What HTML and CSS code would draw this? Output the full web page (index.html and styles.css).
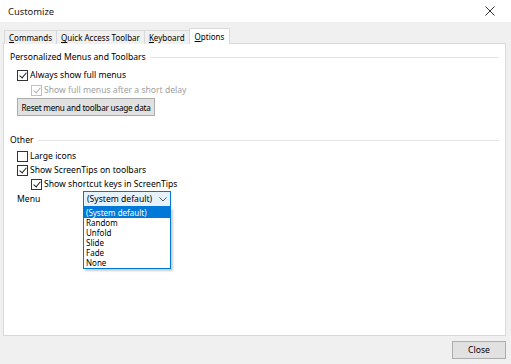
FILE: index.html
```html
<!DOCTYPE html>
<html lang="en">
<head>
  <meta charset="UTF-8" />
  <title>Customize</title>
  <link rel="stylesheet" href="styles.css">
</head>
<body>
  <div class="dialog">
    <div class="titlebar">
      <span class="title">Customize</span>
      <svg class="close-x" width="10" height="10" viewBox="0 0 10 10">
        <path d="M0.5 0.5 L9.5 9.5 M9.5 0.5 L0.5 9.5" stroke="#333" stroke-width="1" fill="none"/>
      </svg>
    </div>

    <div class="tabs">
      <div class="tab"><u>C</u>ommands</div>
      <div class="tab"><u>Q</u>uick Access Toolbar</div>
      <div class="tab"><u>K</u>eyboard</div>
      <div class="tab active"><u>O</u>ptions</div>
    </div>

    <div class="panel">
      <div class="group-title"><span>Personalized Menus and Toolbars</span></div>
      <label class="check first"><span class="box checked"></span>Always show full menus</label>
      <label class="check sub disabled"><span class="box checked"></span>Show full menus after a short delay</label>
      <button class="btn reset">Reset menu and toolbar usage data</button>

      <div class="group-title other"><span>Other</span></div>
      <label class="check"><span class="box"></span>Large icons</label>
      <label class="check"><span class="box checked"></span>Show ScreenTips on toolbars</label>
      <label class="check sub"><span class="box checked"></span>Show shortcut keys in ScreenTips</label>

      <div class="menu-row">
        <span class="menu-label">Menu</span>
        <div class="combo">
          <div class="combo-field">
            <span>(System default)</span>
            <svg width="8" height="5" viewBox="0 0 8 5"><path d="M0.5 0.5 L4 4 L7.5 0.5" stroke="#555" fill="none"/></svg>
          </div>
          <ul class="combo-list">
            <li class="selected">(System default)</li>
            <li>Random</li>
            <li>Unfold</li>
            <li>Slide</li>
            <li>Fade</li>
            <li>None</li>
          </ul>
        </div>
      </div>
    </div>

    <div class="footer">
      <button class="btn close">Close</button>
    </div>
  </div>
</body>
</html>
```

FILE: styles.css
```css
body {
  margin: 0;
  font-family: "Noto Sans", "Open Sans", sans-serif;
  font-size: 8.6px;
  color: #000;
  background: #f0f0f0;
}
.dialog {
  width: 511px;
  height: 364px;
  display: flex;
  flex-direction: column;
}
.titlebar {
  height: 22px;
  background: white;
  display: flex;
  align-items: center;
  justify-content: space-between;
  padding: 0 16px 0 8px;
  font-size: 9.4px;
  color: #222;
}
.tabs {
  display: flex;
  align-items: flex-end;
  padding-left: 4px;
  margin-top: 6px;
  height: 16px;
  position: relative;
  z-index: 1;
  font-size: 8px;
}
.tab {
  height: 14px;
  line-height: 14px;
  padding: 0 4px;
  border: 1px solid #d9d9d9;
  border-bottom: none;
  margin-right: -1px;
  background: #f0f0f0;
  box-sizing: border-box;
}
.tab.active {
  height: 16px;
  line-height: 16px;
  background: white;
  padding: 0 5px;
}
.panel {
  margin: -1px 5px 0 3px;
  height: 293px;
  box-sizing: border-box;
  border: 1px solid #d9d9d9;
  background: white;
  padding: 6px 6px 0 6px;
  display: flex;
  flex-direction: column;
  align-items: flex-start;
}
.group-title {
  display: flex;
  align-items: center;
  width: 100%;
  height: 14px;
}
.group-title::after {
  content: "";
  flex: 1;
  border-top: 1px solid #e3e3e3;
  margin-left: 4px;
}
.group-title.other {
  margin-top: 17px;
}
.check {
  display: flex;
  align-items: center;
  height: 14px;
  margin-left: 7px;
}
.check.first {
  margin-top: 4px;
}
.check.disabled {
  margin-top: 1px;
  color: #a0a0a0;
}
.other + .check {
  margin-top: 2px;
}
.check.sub {
  margin-left: 21px;
}
.box {
  width: 11px;
  height: 11px;
  box-sizing: border-box;
  border: 1px solid #333;
  margin-right: 2px;
  background: white;
  position: relative;
}
.box.checked::after {
  content: "";
  position: absolute;
  left: 3px;
  top: 0px;
  width: 3px;
  height: 6px;
  border: solid #222;
  border-width: 0 1px 1px 0;
  transform: rotate(40deg);
}
.disabled .box {
  border-color: #c0c0c0;
}
.disabled .box.checked::after {
  border-color: #b0b0b0;
}
.btn {
  font-family: inherit;
  font-size: 8.6px;
  background: #e1e1e1;
  border: 1px solid #adadad;
  padding: 0;
  color: #000;
  white-space: nowrap;
}
.reset {
  margin: 1px 0 0 7px;
  width: 138px;
  height: 18px;
  font-size: 8.2px;
  letter-spacing: -0.25px;
}
.menu-row {
  display: flex;
  align-items: flex-start;
  margin: 0 0 0 7px;
}
.menu-label {
  width: 66px;
  height: 16px;
  line-height: 16px;
}
.combo {
  position: relative;
  width: 88px;
}
.combo-field {
  height: 16px;
  box-sizing: border-box;
  border: 1px solid #0078d7;
  background: #e5f1fb;
  display: flex;
  align-items: center;
  justify-content: space-between;
  padding: 0 3px 0 3px;
}
.combo-list {
  position: absolute;
  left: 0;
  top: 16px;
  width: 88px;
  margin: 0;
  padding: 0;
  list-style: none;
  box-sizing: border-box;
  border: 1px solid #0078d7;
  background: white;
  box-shadow: 2px 2px 2px rgba(0, 0, 0, 0.2);
  font-size: 8px;
}
.combo-list li {
  height: 10px;
  line-height: 10px;
  padding-left: 2px;
}
.combo-list li.selected {
  background: #0078d7;
  color: white;
}
.footer {
  display: flex;
  justify-content: flex-end;
  padding: 5px 5px 0 0;
}
.close {
  width: 54px;
  height: 18px;
}
```
